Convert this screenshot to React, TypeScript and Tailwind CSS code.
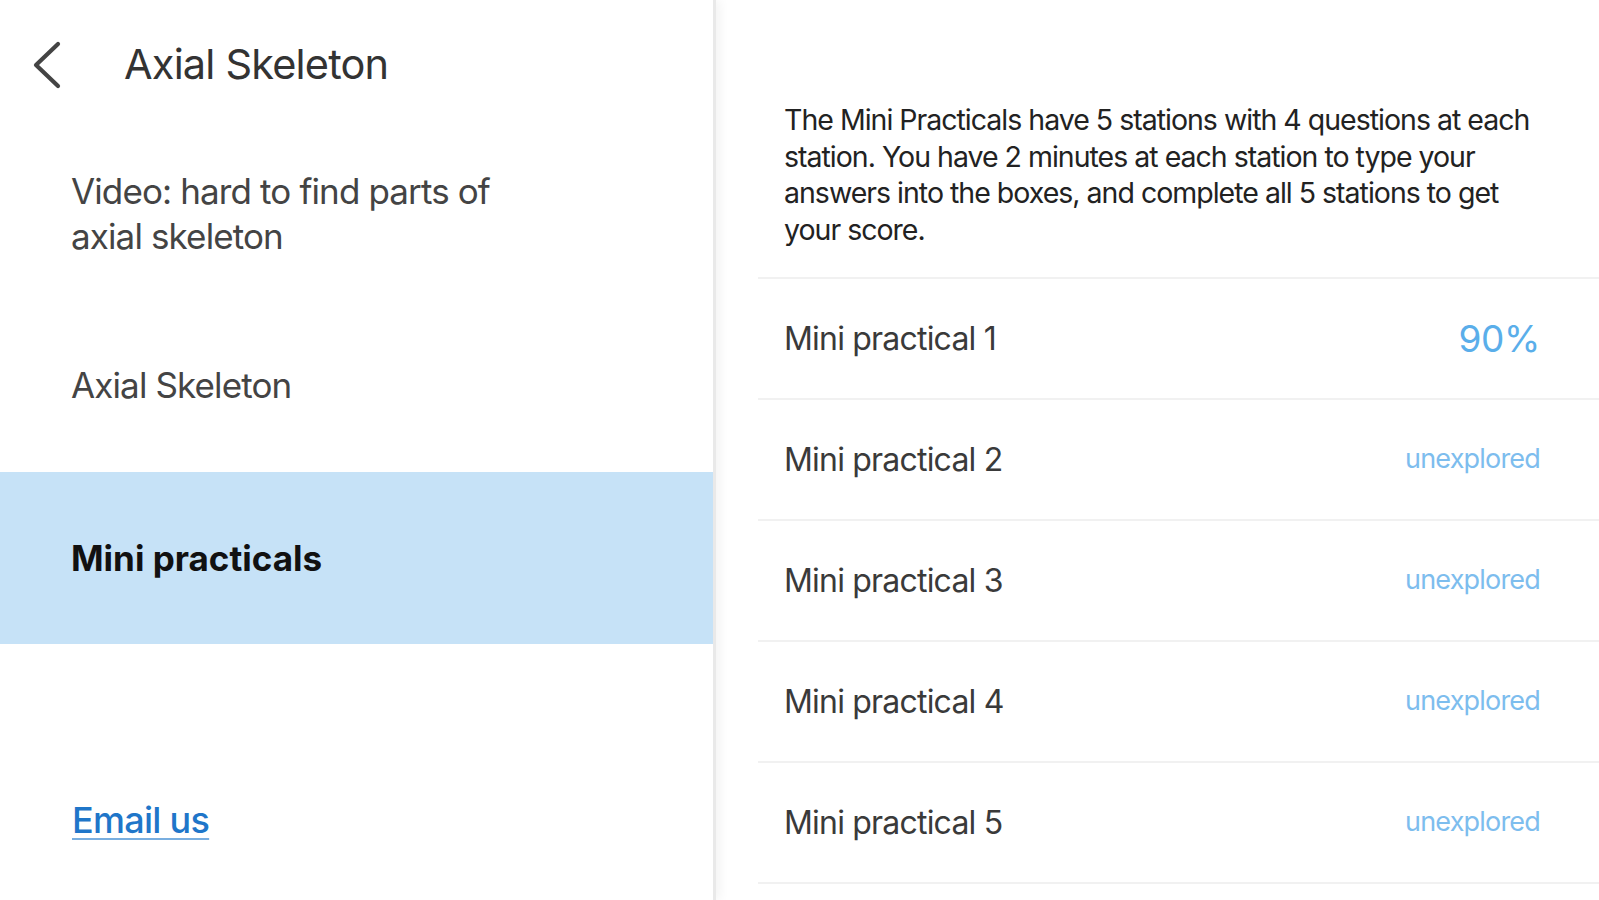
const practicals = [
  { name: 'Mini practical 1', score: '90%' },
  { name: 'Mini practical 2', score: null },
  { name: 'Mini practical 3', score: null },
  { name: 'Mini practical 4', score: null },
  { name: 'Mini practical 5', score: null },
];

export default function App() {
  return (
    <div className="h-screen w-full flex bg-white overflow-hidden font-['Inter','Liberation_Sans',sans-serif]">
      {/* Sidebar */}
      <aside className="w-[716px] shrink-0 flex flex-col border-r-[3px] border-[#e9e9e9] shadow-[4px_0_10px_rgba(0,0,0,0.05)] z-10 bg-white">
        {/* Header */}
        <div className="h-[130px] flex items-center">
          <button className="w-[124px] h-full flex items-center pl-[30px] text-[#444]">
            <svg width="34" height="48" viewBox="0 0 34 48" fill="none">
              <path
                d="M28 3 L6 24 L28 45"
                stroke="currentColor"
                strokeWidth="4.2"
                strokeLinecap="round"
                strokeLinejoin="round"
              />
            </svg>
          </button>
          <h1 className="text-[41.5px] text-[#333] tracking-[-0.02em] leading-none">Axial Skeleton</h1>
        </div>

        {/* Menu */}
        <nav className="flex flex-col">
          <div className="h-[171px] flex items-center pl-[71px] pb-[4px]">
            <p className="text-[35px] leading-[45px] text-[#444] tracking-[-0.025em] w-[480px]">
              Video: hard to find parts of axial skeleton
            </p>
          </div>
          <div className="h-[171px] flex items-center pl-[71px] pb-[2px]">
            <p className="text-[35px] text-[#444] tracking-[-0.025em]">Axial Skeleton</p>
          </div>
          <div className="h-[172px] flex items-center pl-[71px] bg-[#c6e2f7]">
            <p className="text-[35px] font-bold text-[#111] tracking-[0em]">Mini practicals</p>
          </div>
        </nav>

        {/* Footer */}
        <div className="mt-auto pl-[72px] pb-[60px]">
          <a href="#" className="text-[36px] leading-[40px] font-medium text-[#1f76c9] underline underline-offset-[5px] decoration-2 decoration-[#78aee0] tracking-[-0.02em]">
            Email us
          </a>
        </div>
      </aside>

      {/* Content */}
      <main className="flex-1 pl-[42px]">
        <div className="pt-[102px] pb-[29px] pl-[26px] pr-[52px] border-b-2 border-[#f1f1f1]">
          <p className="text-[28.5px] leading-[36.5px] text-[#222] tracking-[-0.035em]">
            The Mini Practicals have 5 stations with 4 questions at each station. You have 2 minutes at each station to type your answers into the boxes, and complete all 5 stations to get your score.
          </p>
        </div>

        {practicals.map((p) => (
          <div
            key={p.name}
            className="h-[121px] flex items-center justify-between pl-[26px] pr-[59px] border-b-2 border-[#f1f1f1]"
          >
            <span className="text-[32px] text-[#3a3a3a] tracking-[-0.025em]">{p.name}</span>
            {p.score ? (
              <span className="text-[37px] text-[#5aaeea] tracking-[-0.01em]">{p.score}</span>
            ) : (
              <span className="text-[27px] text-[#7dbdee] tracking-[-0.03em]">unexplored</span>
            )}
          </div>
        ))}
      </main>
    </div>
  );
}
